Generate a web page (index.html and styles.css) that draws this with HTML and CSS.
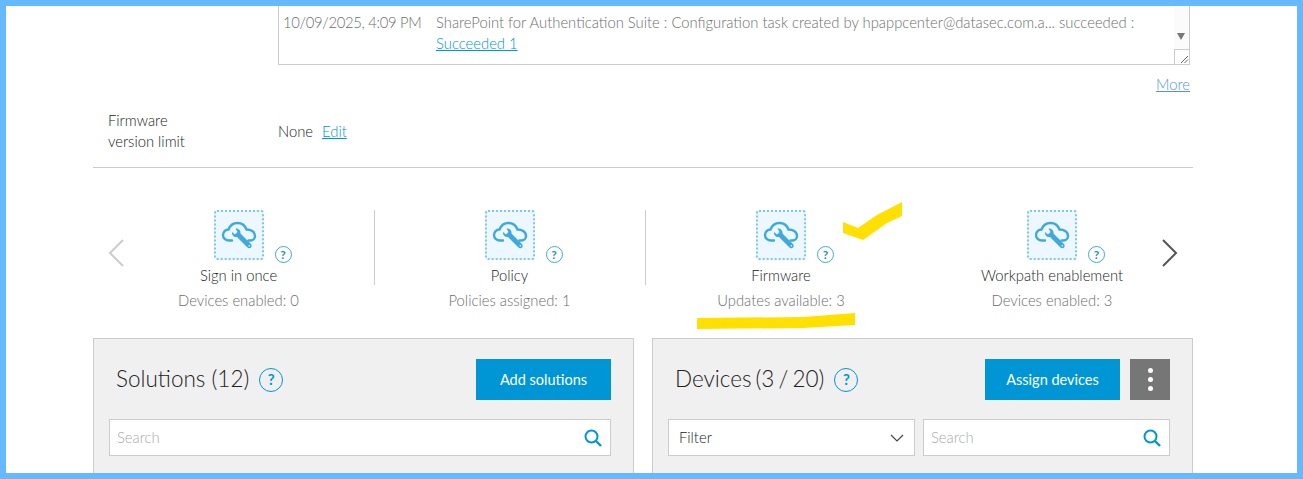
FILE: index.html
```html
<!DOCTYPE html>
<html lang="en">
<head>
    <meta charset="UTF-8">
    <meta name="viewport" content="width=device-width, initial-scale=1.0">
    <title>Firmware</title>
    <link rel="stylesheet" href="styles.css">
</head>
<body>

<svg width="0" height="0" class="defs">
    <symbol id="cloud" viewBox="0 0 36 28">
        <path d="M11 19.500H8C4.500 19.500 2 17 2 14C2 11 4.500 8.500 7.500 8.500C9 4.500 12.500 2 16.500 2C20.500 2 24 4.500 25.500 8.500C29.500 8.500 34 10.500 34 15C34 17.500 32 19.500 29.500 19.500H27.500" fill="none" stroke="#3fa9dc" stroke-width="2.400" stroke-linecap="round"/>
        <path d="M14.500 7.500C17.500 7 20 9.500 19.500 12.500L29.500 22.500C31 24 31 25.500 30 26.500C29 27.500 27.500 27.500 26 26L16 16C13 16.500 10.500 14 11 11L14 13.500L16.500 11Z" fill="#3fa9dc"/>
        <circle cx="28.300" cy="24.800" r="0.800" fill="#fff"/>
    </symbol>
    <symbol id="search" viewBox="0 0 18 18">
        <circle cx="7.500" cy="7.500" r="6" fill="none" stroke="#0096d6" stroke-width="2"/>
        <path d="M12 12L17 17" stroke="#0096d6" stroke-width="2.400"/>
    </symbol>
</svg>

<div class="frame">
    <div class="row log-row">
        <div class="label"></div>
        <div class="log">
            <div class="log-date">10/09/2025, 4:09 PM</div>
            <div class="log-text">SharePoint for Authentication Suite : Configuration task created by hpappcenter@datasec.com.a... succeeded : <a href="#">Succeeded 1</a></div>
            <div class="log-scroll">
                <span class="scroll-down"></span>
                <span class="grip">
                    <svg width="14" height="14" viewBox="0 0 14 14"><path d="M6 13L13 6M9.500 13L13 9.500" stroke="#666" stroke-width="1"/></svg>
                </span>
            </div>
        </div>
    </div>
    <div class="more"><a href="#">More</a></div>

    <div class="row limit-row">
        <div class="label">Firmware<br>version limit</div>
        <div class="limit-value">None <a href="#">Edit</a></div>
    </div>

    <div class="carousel">
        <svg class="arrow arrow-prev" width="18" height="28" viewBox="0 0 18 28"><path d="M16 1L3 14L16 27" fill="none" stroke="#ccc" stroke-width="2"/></svg>
        <div class="tile">
            <div class="tile-top">
                <div class="tile-icon"><svg width="36" height="28"><use href="#cloud"/></svg></div>
                <span class="help-sm">?</span>
            </div>
            <div class="tile-name">Sign in once</div>
            <div class="tile-sub">Devices enabled: 0</div>
        </div>
        <div class="tile">
            <div class="tile-top">
                <div class="tile-icon"><svg width="36" height="28"><use href="#cloud"/></svg></div>
                <span class="help-sm">?</span>
            </div>
            <div class="tile-name">Policy</div>
            <div class="tile-sub">Policies assigned: 1</div>
        </div>
        <div class="tile tile-plain">
            <div class="tile-top">
                <div class="tile-icon"><svg width="36" height="28"><use href="#cloud"/></svg></div>
                <span class="help-sm">?</span>
            </div>
            <div class="tile-name">Firmware</div>
            <div class="tile-sub">Updates available: 3</div>
        </div>
        <div class="tile tile-plain">
            <div class="tile-top">
                <div class="tile-icon"><svg width="36" height="28"><use href="#cloud"/></svg></div>
                <span class="help-sm">?</span>
            </div>
            <div class="tile-name">Workpath enablement</div>
            <div class="tile-sub">Devices enabled: 3</div>
        </div>
        <svg class="arrow arrow-next" width="18" height="28" viewBox="0 0 18 28"><path d="M2 1L15 14L2 27" fill="none" stroke="#555" stroke-width="2"/></svg>
    </div>

    <div class="panels">
        <div class="panel">
            <div class="panel-head">
                <h2 class="title-solutions">Solutions (12)</h2>
                <span class="help-lg">?</span>
                <button class="btn">Add solutions</button>
            </div>
            <div class="panel-tools">
                <div class="search">
                    <span>Search</span>
                    <svg width="18" height="18"><use href="#search"/></svg>
                </div>
            </div>
        </div>
        <div class="panel">
            <div class="panel-head">
                <h2>Devices (3 / 20)</h2>
                <span class="help-lg">?</span>
                <button class="btn">Assign devices</button>
                <button class="btn-menu"><i></i><i></i><i></i></button>
            </div>
            <div class="panel-tools">
                <div class="filter">
                    <span>Filter</span>
                    <svg width="14" height="8" viewBox="0 0 14 8"><path d="M1 1L7 7L13 1" fill="none" stroke="#444" stroke-width="1.200"/></svg>
                </div>
                <div class="search">
                    <span>Search</span>
                    <svg width="18" height="18"><use href="#search"/></svg>
                </div>
            </div>
        </div>
    </div>

    <!-- yellow marker drawn over the screenshot -->
    <svg class="mark mark-check" width="62" height="42" viewBox="0 0 62 42"><path d="M1 22L16 28L35 15L60 2V16L45 23L21 40L1 33Z" fill="#ffe000"/></svg>
    <svg class="mark mark-line" width="160" height="18" viewBox="0 0 160 18"><path d="M1 6L107 5L159 1V13L107 16L1 17Z" fill="#ffe000"/></svg>
</div>

</body>
</html>
```

FILE: styles.css
```css
* {
    box-sizing: border-box;
}
body {
    margin: 0;
    font-family: Lato, "Open Sans", sans-serif;
    font-weight: 300;
    font-size: 14.800px;
    color: #222;
    background-color: #fff;
}
a {
    color: #0096d6;
}
.defs {
    position: absolute;
}
.frame {
    position: relative;
    width: 1303px;
    height: 479px;
    border: 6px solid #66b8ff;
    padding-left: 87px;
    overflow: hidden;
}
.row {
    display: flex;
    width: 1100px;
}
.label {
    width: 185px;
    flex: none;
    line-height: 21px;
}
.log {
    display: flex;
    width: 912px;
    height: 59px;
    border: 1px solid #ccc;
    border-top: none;
    color: #6e6e6e;
    line-height: 21px;
}
.log-date {
    flex: none;
    width: 153px;
    padding: 6px 0 0 4px;
    letter-spacing: -0.300px;
}
.log-text {
    flex: 1;
    padding: 6px 20px 0 4px;
}
.log-scroll {
    position: relative;
    flex: none;
    width: 15px;
    background-color: #fbfbfb;
}
.scroll-down {
    position: absolute;
    top: 27px;
    left: 3px;
    border-left: 4.500px solid transparent;
    border-right: 4.500px solid transparent;
    border-top: 7px solid #777;
}
.grip {
    position: absolute;
    right: 0;
    bottom: 0;
    width: 15px;
    height: 15px;
    border-top: 1px solid #ccc;
    border-left: 1px solid #ccc;
    background-color: #fff;
}
.grip svg {
    display: block;
}
.more {
    width: 1097px;
    margin-top: 9px;
    text-align: right;
    line-height: 20px;
}
.more a {
    color: #4f97d6;
}
.limit-row {
    align-items: center;
    height: 74px;
    padding: 6px 0 6px 15px;
    border-bottom: 1px solid #ccc;
}
.limit-row .label {
    width: 170px;
}
.limit-value a {
    margin-left: 5px;
}
.carousel {
    position: relative;
    display: flex;
    align-items: flex-start;
    width: 1100px;
    height: 170px;
    padding: 42px 0 0 10.500px;
}
.arrow {
    position: absolute;
    top: 71px;
}
.arrow-prev {
    left: 14px;
}
.arrow-next {
    left: 1068px;
}
.tile {
    flex: none;
    width: 271px;
    height: 75px;
    text-align: center;
    border-right: 1px solid #ccc;
}
.tile-plain {
    border-right: none;
}
.tile-top {
    position: relative;
    width: 50px;
    height: 50px;
    margin: 0 auto;
}
.tile-icon {
    display: flex;
    align-items: center;
    justify-content: center;
    width: 50px;
    height: 50px;
    background-color: #ecf7ff;
    border: 2px dotted #7cc8ee;
    border-radius: 3px;
}
.help-sm {
    position: absolute;
    left: 61px;
    bottom: -3px;
    width: 17px;
    height: 17px;
    border: 1px solid #3fa9dc;
    border-radius: 50%;
    color: #1f8fc9;
    font-size: 12px;
    font-weight: 700;
    line-height: 15px;
    text-align: center;
}
.tile-name {
    margin-top: 5px;
    line-height: 20px;
    white-space: nowrap;
}
.tile-sub {
    margin-top: 5px;
    color: #6e6e6e;
    line-height: 20px;
    white-space: nowrap;
}
.panels {
    display: flex;
    gap: 18px;
    width: 1100px;
}
.panel {
    width: 541px;
    height: 140px;
    padding: 20px 22px 0 15px;
    background-color: #f0f0f0;
    border: 1px solid #ccc;
}
.panel-head {
    display: flex;
    align-items: center;
    height: 41px;
    padding-left: 7px;
}
h2 {
    margin: 0 10px 2px 0;
    font-size: 22.500px;
    font-weight: 300;
    word-spacing: -2px;
}
.title-solutions {
    word-spacing: 0;
}
.help-lg {
    width: 24px;
    height: 24px;
    border: 1.500px solid #0096d6;
    border-radius: 50%;
    color: #0096d6;
    font-size: 15px;
    font-weight: 700;
    line-height: 21px;
    text-align: center;
}
.btn {
    width: 135px;
    height: 41px;
    margin-left: auto;
    border: none;
    background-color: #0096d6;
    color: #fff;
    font-family: inherit;
    font-size: 14.500px;
    font-weight: 400;
}
.btn-menu {
    display: flex;
    flex-direction: column;
    align-items: center;
    justify-content: center;
    gap: 4px;
    width: 40px;
    height: 41px;
    margin-left: 10px;
    border: none;
    background-color: #767676;
}
.btn-menu i {
    width: 5px;
    height: 5px;
    border-radius: 50%;
    background-color: #fff;
}
.panel-tools {
    display: flex;
    gap: 8px;
    margin-top: 19px;
}
.search,
.filter {
    display: flex;
    align-items: center;
    justify-content: space-between;
    flex: 1;
    height: 37px;
    padding: 0 8px 0 7px;
    background-color: #fff;
    border: 1px solid #ccc;
}
.search span,
.filter span {
    margin-bottom: 2px;
}
.search span {
    color: #aaa;
}
.filter {
    flex: none;
    width: 247px;
    padding: 0 10px;
}
.mark {
    position: absolute;
}
.mark-check {
    left: 836px;
    top: 194px;
}
.mark-line {
    left: 690px;
    top: 306px;
}
```
